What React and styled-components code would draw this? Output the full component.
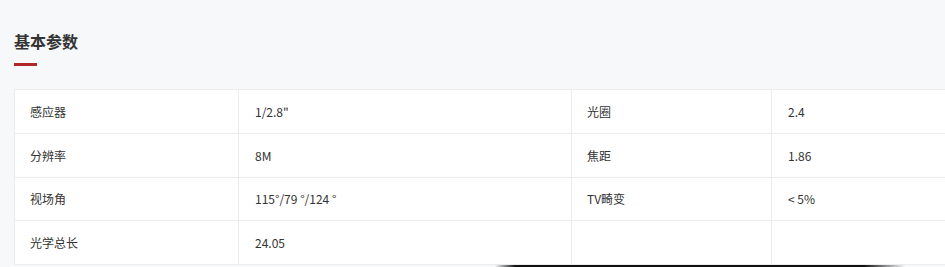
import React from 'react';
import styled, { createGlobalStyle } from 'styled-components';

const GlobalStyle = createGlobalStyle`
  html, body {
    margin: 0;
    padding: 0;
    background: #f7f8fa;
    overflow: hidden;
  }
  body {
    font-family: "Noto Sans CJK SC", "Liberation Sans", sans-serif;
    color: #333;
  }
`;

const Section = styled.section`
  padding: 29px 0 0 14px;
  width: 980px;
`;

const Title = styled.h3`
  margin: 0;
  font-size: 16px;
  line-height: 24px;
  font-weight: 700;
  color: #333;
`;

const Underline = styled.div`
  width: 23px;
  height: 3px;
  margin-top: 10px;
  background: #b3262a;
`;

const Table = styled.div`
  display: grid;
  grid-template-columns: 224px 333px 200px 220px;
  margin-top: 23px;
  background: #fff;
  border-top: 1px solid #ececec;
  border-left: 1px solid #ececec;
`;

const Cell = styled.div`
  display: flex;
  align-items: center;
  box-sizing: border-box;
  height: 43.75px;
  padding-left: ${(p) => (p.$label ? 15 : 16)}px;
  border-right: 1px solid #ececec;
  border-bottom: 1px solid #ececec;
  font-size: 12px;
  color: #333;
`;

const Shade = styled.div`
  width: 410px;
  height: 3px;
  margin-left: 481px;
  background: linear-gradient(to right, rgba(17,17,17,0) 0%, #111 5%, #111 90%, rgba(17,17,17,0) 100%);
`;

const rows = [
  ['感应器', '1/2.8"', '光圈', '2.4'],
  ['分辨率', '8M', '焦距', '1.86'],
  ['视场角', '115°/79 °/124 °', 'TV畸变', '< 5%'],
  ['光学总长', '24.05', '', ''],
];

const App = () => (
  <>
    <GlobalStyle />
    <Section>
      <Title>基本参数</Title>
      <Underline />
      <Table>
        {rows.map((row, i) =>
          row.map((text, j) => (
            <Cell key={`${i}-${j}`} $label={j % 2 === 0}>
              {text}
            </Cell>
          ))
        )}
      </Table>
      <Shade />
    </Section>
  </>
);

export default App;
